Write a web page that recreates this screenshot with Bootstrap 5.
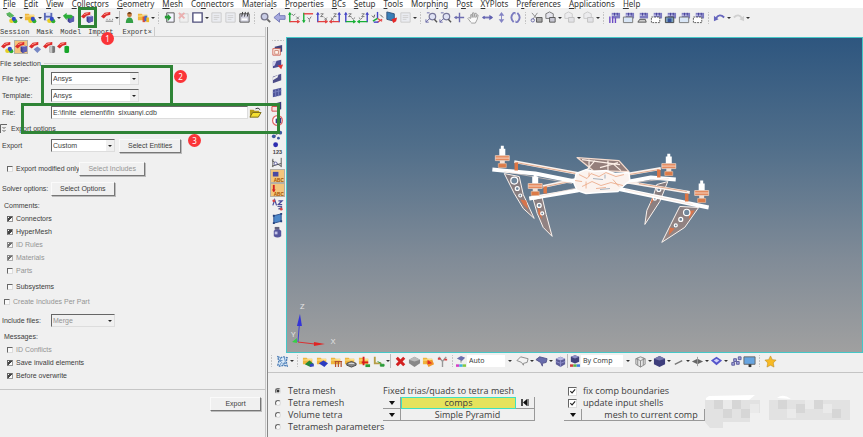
<!DOCTYPE html>
<html lang="en">
<head>
<meta charset="utf-8">
<meta name="viewport" content="width=device-width, initial-scale=1">
<title>HyperMesh - Export</title>
<link href="https://cdn.jsdelivr.net/npm/bootstrap@5.3.0/dist/css/bootstrap.min.css" rel="stylesheet">
<style>
:root{--face:#f0f0f0;--ink:#3c3c3c;--dim:#949494;--mark:#2f8436}
body{font:8px/12px "Noto Sans","Open Sans",sans-serif;color:var(--ink);background:var(--face)}
button,select,input{font:inherit;color:inherit}
.menubar{line-height:8px;height:8px;padding-left:3px;gap:8px;background:#fff}
.menubar a{color:#333;text-decoration:none}
.menubar u{text-underline-offset:1px}
.tools{height:19px;padding-left:4px}
.tool{width:14px;height:14px;padding:0;border:0;background:none;flex:none;display:flex;align-items:center;justify-content:center}
.tool svg{width:13px;height:13px;display:block;flex:none}
.tool.faded{opacity:.3}
.tool.pressed{background:#f3c57c;outline:1px solid #b5b0a6;outline-offset:-1px}
.tool.marked{width:19px;height:21px;margin:0 3px;border:3px solid var(--mark)}
.drop{width:5px;height:14px;padding:0;border:0;background:none;flex:none;display:flex;align-items:center;justify-content:center}
.drop::after{content:"";border:2px solid transparent;border-top-color:#333;border-bottom:0}
.grip{width:7px;height:12px;flex:none;background:radial-gradient(circle,#999 0 1px,transparent 1px) center/3px 3px repeat-y}
.rule{width:3px;height:14px;flex:none;border-left:1px solid #bbb}
.export-panel{width:266px;border-right:1px solid #c8c8c8;font:7px/13px "Liberation Sans",Arial,sans-serif}
.tabs{font:7px/10px "Liberation Mono",monospace;border-bottom:1px solid #d0d0d0;height:10px;gap:7px}
.tabs button{border:0;padding:0;background:none}
.tabs .current{border-right:1px solid #ccc;padding:0 2px}
.mode-row{height:20px;padding:3px 0}
.legend-line{height:13px}
.legend-line::after{content:"";flex:1;border-top:1px solid #d3d3d3;margin:0 3px}
.field{height:17px;padding:0 3px 0 2px}
.short{height:15px}
.caption-col{width:49px;flex:none}
.sunken{height:13px;border:1px solid;border-color:#666 #ddd #ddd #666;background:#fff;padding:0 1px;border-radius:0;line-height:11px;outline:0}
.combo{appearance:none;width:88px;background:#fff linear-gradient(#f0f0f0,#f0f0f0) right/8px 100% no-repeat}
.combo-box{position:relative;display:flex}
.combo-box::after{content:"";position:absolute;right:3px;top:6px;border:2px solid transparent;border-top-color:#222;border-bottom:0;pointer-events:none}
.narrow{width:64px}
.raised{height:14px;padding:0 4px;border:1px solid;border-color:#fafafa #777 #777 #fafafa;border-radius:0;background:var(--face);line-height:12px;box-shadow:1px 1px 0 #bbb}
.check{height:13px;padding-left:7px;gap:3px}
.check input,.opt input{appearance:none;flex:none;width:6px;height:6px;margin:0;border:1px solid;border-color:#666 #ddd #ddd #666;background:#fafafa center/5px 5px no-repeat}
.check input:checked{border-color:#666 #999 #999 #666;background-image:linear-gradient(135deg,transparent 25%,#444 25% 60%,transparent 60%)}
.check input:disabled:checked{opacity:.75}
.off,.combo:disabled,.raised:disabled{color:var(--dim)}
.combo:disabled{background-color:var(--face);opacity:1}
.g2{margin-top:2px}.g3{margin-top:3px}.g5{margin-top:5px}.g8{margin-top:8px}
.foot{border-top:1px solid #c6c6c6;margin-top:7px;padding:7px 4px}
.export-button{width:51px}
.workspace{border-left:1px solid #888;margin-left:1px}
.side-tools{width:18px;padding:10px 0 0 1px}
.side-tools .grip{width:12px;height:6px;background:radial-gradient(circle,#999 0 1px,transparent 1px) center/3px 3px repeat-x}
.side-tools .tool{width:15px}
.canvas3d{margin-top:10px;border:1px solid #45c7c7;background:linear-gradient(#2e567f,#506e8a 34%,#808b97 70%,#a0a0a0)}
.view-tools{height:16px}
.view-pick{gap:1px;font-size:7px}
.view-pick svg{width:10px;height:12px}
.view-pick select{appearance:none;border:0;border-radius:0;background:#fff;padding:0 2px;height:12px;width:38px}
.view-pick .color-mode{width:42px}
.wide-drop{width:10px}
.task{border-top:1px solid #c4c4c4;height:65px;padding:12px 12px 0 7px;margin-top:3px;font:9px/12px "Open Sans","Noto Sans",sans-serif;overflow:hidden}
.opt{height:12px;gap:7px;white-space:nowrap}
.opt input{border-radius:50%}
.opt input:checked{background:radial-gradient(circle,#333 0 1px,#fff 2px)}
.opt .tick{width:9px;height:9px;border-radius:0;background:#fff}
.opt .tick:checked{background:#fff url("data:image/svg+xml,%3Csvg xmlns='http://www.w3.org/2000/svg' viewBox='0 0 8 8'%3E%3Cpath d='M1.500 3.500l2 2 3.500-4' fill='none' stroke='%23222' stroke-width='1.300'/%3E%3C/svg%3E") center/7px 7px no-repeat}
.task-a{width:108px}.task-b{width:152px}.task-c{width:141px;margin-left:29px}
.bar button{height:12px;border:0;border-right:1px solid #999;border-bottom:1px solid #999;background:var(--face);padding:0;line-height:11px;white-space:nowrap}
.bar .pick{width:18px;flex:none;display:flex;align-items:center;justify-content:center}
.pick::after{content:"";border:3px solid transparent;border-top:4px solid #111;border-bottom:0}
.bar .comps{background:#e5e35c;border:1px solid #3fe0c0;line-height:10px}
.indent{padding-left:4px;gap:6px}
.hidden-area{height:34px;margin-top:10px;min-width:0}
.mark-box{position:absolute;border:3px solid var(--mark);pointer-events:none}
.mark-box.two{left:41px;top:65px;width:132px;height:41px}
.mark-box.three{left:21px;top:103px;width:259px;height:31px}
.step{position:absolute;width:13px;height:13px;border-radius:50%;background:#fb3438;color:#fff;text-align:center;line-height:13px;font-size:8px}
.s1{left:101px;top:32px}.s2{left:174px;top:70px}.s3{left:188px;top:134px}
</style>
<script src="https://cdn.jsdelivr.net/npm/bootstrap@5.3.0/dist/js/bootstrap.bundle.min.js"></script>
</head>
<body class="d-flex flex-column vh-100 overflow-hidden position-relative">

<svg class="d-none" aria-hidden="true">
<defs>
<g id="p-cube"><path d="M6 6l5-1 2 1v5l-5 2-2-2z" fill="#3c3c90"/><path d="M6 6l5-1 2 1-5 1z" fill="#9a9ad8"/><path d="M8 7l5-1v5l-5 2z" fill="#5d5db4"/></g>
<g id="p-red"><path d="M0 6l4-4 6-1 0 3-4 1-3 3z" fill="#dc2b2b"/><path d="M3 4l5-2" stroke="#ff9a8a"/></g>
<g id="p-green"><path d="M1 5l4-3v2h5l2 2-2 2H5v2z" fill="#2eae3a"/></g>
<g id="p-balls"><circle cx="7" cy="10.500" r="2.500" fill="#e6cf25"/><circle cx="11" cy="11" r="2.300" fill="#2fae32"/><circle cx="9.500" cy="8.500" r="2.300" fill="#3349c8"/></g>
<g id="p-folder"><path d="M1 3h4l1 1h5v6H1z" fill="#efb53c"/><path d="M1 5l10-1v2H1z" fill="#ffe38a"/></g>
<g id="p-win"><path d="M4 2h9v6H4z" fill="#7c7ac0"/><path d="M3 4h8v1H3z" fill="#d8d8f2"/><path d="M7 2v3M10 2v3" stroke="#443f96"/></g>
<g id="p-abc"><text x="3" y="13" font-size="5" font-weight="bold" font-family="Liberation Sans" fill="#a14f00">ABC</text></g>
</defs>
<symbol id="new" viewBox="0 0 14 14"><path d="M1 3l4-2 5 4-3 2z" fill="#58b85c"/><path d="M2 4l4 3" stroke="#257f2c"/><use href="#p-balls"/></symbol>
<symbol id="open" viewBox="0 0 14 14"><use href="#p-folder"/><use href="#p-balls"/></symbol>
<symbol id="save" viewBox="0 0 14 14"><path d="M1 2h9v8H1z" fill="#5968b6"/><path d="M3 2h5v3H3zM3 7h5v3H3z" fill="#dde4f8"/><use href="#p-balls"/></symbol>
<symbol id="import" viewBox="0 0 14 14"><use href="#p-cube"/><use href="#p-green"/></symbol>
<symbol id="export" viewBox="0 0 14 14"><use href="#p-cube"/><use href="#p-red"/></symbol>
<symbol id="export-text" viewBox="0 0 14 14"><use href="#p-red"/><path d="M5 11h8M6 9h1m2 0h1m2 0h1" stroke="#777"/></symbol>
<symbol id="user" viewBox="0 0 14 14"><circle cx="7" cy="4" r="2.600" fill="#c77a3c"/><path d="M4.500 3q2.500-4 5 0z" fill="#5c3212"/><path d="M3 13q0-6 4-6t4 6z" fill="#35a047"/></symbol>
<symbol id="profile" viewBox="0 0 14 14"><use href="#p-folder"/><path d="M6 6h3v6H6z" fill="#df4c33"/><path d="M8 5h3v6H8z" fill="#3f6bd0"/><path d="M10 7h3v5h-3z" fill="#efbd27"/></symbol>
<symbol id="page-add" viewBox="0 0 14 14"><path d="M4 2h8v10H4z" fill="#f4f4ff" stroke="#555"/><path d="M2 5h3V3l4 4-4 4V8H2z" fill="#279a36"/></symbol>
<symbol id="page-del" viewBox="0 0 14 14"><path d="M3 3h9v9H3z" fill="#eee" stroke="#888"/><path d="M2 2l6 6m0-6l-6 6" stroke="#e02020" stroke-width="2"/></symbol>
<symbol id="frame" viewBox="0 0 14 14"><path d="M2 2h10v10H2z" fill="#fff" stroke="#50507c" stroke-width="1.500"/></symbol>
<symbol id="page" viewBox="0 0 14 14"><path d="M2 2h10v10H2z" fill="#dfe3f4" stroke="#777"/><path d="M4 5h6M4 7h6M4 9h4" stroke="#888"/></symbol>
<symbol id="report" viewBox="0 0 14 14"><path d="M2 3h10v9H2z" fill="#d5d5e2" stroke="#555"/><path d="M5 1l-1 5M8 1L7 6M11 1l-1 5" stroke="#333"/><path d="M4 8h6v2H4z" fill="#fff"/></symbol>
<symbol id="zoom" viewBox="0 0 14 14"><circle cx="6" cy="6" r="3.500" fill="#c9cde6" stroke="#77778c" stroke-width="1.500"/><path d="M9 9l3 3" stroke="#666" stroke-width="2"/></symbol>
<symbol id="zoom-box" viewBox="0 0 14 14"><circle cx="8" cy="6" r="3.500" fill="#dfe2f4" stroke="#77779a" stroke-width="1.300"/><path d="M10 9l3 3" stroke="#555" stroke-width="1.500"/><path d="M1 12l4-4M1 9v3h3M2 2h3" stroke="#6868a8" fill="none"/></symbol>
<symbol id="back" viewBox="0 0 14 14"><path d="M1 7l6-5v3h6v4H7v3z" fill="#a5a8de" stroke="#7478b5"/></symbol>
<symbol id="ax1" viewBox="0 0 14 14"><path d="M3 2v10" stroke="#17af35" stroke-width="1.500"/><path d="M3 11.500h10M11 10l2 1.500-2 1.500" stroke="#e34141" fill="none" stroke-width="1.300"/><path d="M1 4l2-3 2 3z" fill="#17af35"/><path d="M5 3l2 2 2-2M10 6l3 3m0-3l-3 3" stroke="#777" fill="none"/></symbol>
<symbol id="ax2" viewBox="0 0 14 14"><path d="M3 2v10" stroke="#17af35" stroke-width="1.500"/><path d="M3 3h10" stroke="#e34141" stroke-width="1.500"/><path d="M1 10l2 3 2-3z" fill="#17af35"/><path d="M7 7l2 2 2-3M9 9v3" stroke="#777" fill="none"/></symbol>
<symbol id="ax3" viewBox="0 0 14 14"><path d="M3 2v10" stroke="#4444c6" stroke-width="1.500"/><path d="M3 11.500h10M11 10l2 1.500-2 1.500" stroke="#e34141" fill="none" stroke-width="1.300"/><path d="M1 4l2-3 2 3z" fill="#4444c6"/><path d="M6 3h3L6 6h3M10 7l3 3m0-3l-3 3" stroke="#777" fill="none"/></symbol>
<symbol id="ax4" viewBox="0 0 14 14"><path d="M11 2v10" stroke="#4444c6" stroke-width="1.500"/><path d="M1 11.500h10M3 10l-2 1.500L3 13" stroke="#e34141" fill="none" stroke-width="1.300"/><path d="M9 4l2-3 2 3z" fill="#4444c6"/><path d="M5 3h3L5 6h3M2 7l3 3m0-3l-3 3" stroke="#777" fill="none"/></symbol>
<symbol id="ax5" viewBox="0 0 14 14"><path d="M3 2v10" stroke="#4444c6" stroke-width="1.500"/><path d="M3 11.500h10M11 10l2 1.500-2 1.500" stroke="#17af35" fill="none" stroke-width="1.300"/><path d="M1 4l2-3 2 3z" fill="#4444c6"/><path d="M6 3h3L6 6h3M9 7l2 2 2-2" stroke="#777" fill="none"/></symbol>
<symbol id="ax6" viewBox="0 0 14 14"><path d="M11 2v10" stroke="#4444c6" stroke-width="1.500"/><path d="M1 11.500h10M3 10l-2 1.500L3 13" stroke="#17af35" fill="none" stroke-width="1.300"/><path d="M9 4l2-3 2 3z" fill="#4444c6"/><path d="M5 3h3L5 6h3M2 7l2 2 2-2" stroke="#777" fill="none"/></symbol>
<symbol id="iso" viewBox="0 0 14 14"><path d="M7 8V1" stroke="#4444c6" stroke-width="1.500"/><path d="M7 8l5 3M7 12l5-3" stroke="#e34141" stroke-width="1.300"/><path d="M7 8l-5 3" stroke="#17af35" stroke-width="1.500"/><path d="M1 5l2 2 1-3M10 4l3 3" stroke="#555" fill="none"/><path d="M3 12h5" stroke="#4444c6" stroke-width="1.500"/></symbol>
<symbol id="view-set" viewBox="0 0 14 14"><path d="M2 1l8 2v8l-8-2z" fill="#3a7fb8" stroke="#31527c"/><path d="M7 9l6-2-1 4-3 2z" fill="#e62828"/></symbol>
<symbol id="move" viewBox="0 0 14 14"><path d="M7 2v10M2 7h10" stroke="#6d6db0" stroke-width="1.500"/><path d="M1 7l3-2v4z" fill="#6d6db0"/></symbol>
<symbol id="hand" viewBox="0 0 14 14"><path d="M4 12L1 8l1-1 2 1V4h1.500v3l.5-5h1.500v5l1-4.500H10L9.500 7l1.500-3 1 .5L11 9l-2 4H5z" fill="#fafafa" stroke="#888" stroke-width=".8"/></symbol>
<symbol id="pan-h" viewBox="0 0 14 14"><path d="M2 7h10" stroke="#7474bb" stroke-width="2"/><path d="M9 4l4 3-4 3zM4 5L1 7l3 2z" fill="#6060b0"/></symbol>
<symbol id="pan-v" viewBox="0 0 14 14"><path d="M7 3v8" stroke="#8484c4"/><path d="M4 5l3-4 3 4zM4 9l3 4 3-4z" fill="#8484c4"/></symbol>
<symbol id="spin" viewBox="0 0 14 14"><path d="M5 2q-5 5 0 10M9 2q5 5 0 10" fill="none" stroke="#7a7abf" stroke-width="2"/><path d="M4 1h3v3zM7 10v3h3z" fill="#7a7abf"/></symbol>
<symbol id="cut" viewBox="0 0 14 14"><path d="M2 2l6 7M8 2L3 9" stroke="#888"/><circle cx="3" cy="10" r="1.800" fill="none" stroke="#6d6dab"/><path d="M7 7h6v5H7z" fill="#aaa" stroke="#555"/></symbol>
<symbol id="copy" viewBox="0 0 14 14"><path d="M2 3l4-2 4 2v5H2z" fill="#e4e4ec" stroke="#777"/><path d="M6 7h6v5H6z" fill="#c7c7d3" stroke="#555"/></symbol>
<symbol id="w1" viewBox="0 0 14 14"><use href="#p-win"/><path d="M2 6v7M5 6v7M8 7v6" stroke="#6c4bc4" stroke-width="1.500"/></symbol>
<symbol id="w2" viewBox="0 0 14 14"><use href="#p-win"/><path d="M1.500 6.500h10v6h-10z" fill="#d9e6f6" stroke="#777"/></symbol>
<symbol id="w3" viewBox="0 0 14 14"><use href="#p-win"/><path d="M2 12l2-3h6l1 3z" fill="#ccc" stroke="#555"/></symbol>
<symbol id="w4" viewBox="0 0 14 14"><use href="#p-win"/><path d="M1.500 6.500h9v6h-9z" fill="#fff" stroke="#555" stroke-dasharray="2 1"/></symbol>
<symbol id="w5" viewBox="0 0 14 14"><use href="#p-win"/><path d="M1.500 6.500h9v6h-9z" fill="#7ba1bd" stroke="#444"/><path d="M4 8h4v4H4z" fill="#35509a"/></symbol>
<symbol id="undo" viewBox="0 0 14 14"><path d="M3 8q4-6 9-1" fill="none" stroke="#6666bd" stroke-width="2"/><path d="M1 5v6l5-2z" fill="#6666bd"/></symbol>
<symbol id="redo" viewBox="0 0 14 14"><path d="M11 8Q7 2 2 7" fill="none" stroke="#888" stroke-width="2"/><path d="M13 5v6L8 9z" fill="#888"/></symbol>
<symbol id="ex-balls" viewBox="0 0 14 14"><use href="#p-balls"/><use href="#p-red"/></symbol>
<symbol id="ex-geo" viewBox="0 0 14 14"><use href="#p-red"/><path d="M5 9l4-3 4 3-4 4z" fill="#7788c4"/></symbol>
<symbol id="ex-cyl" viewBox="0 0 14 14"><use href="#p-red"/><path d="M7 6q3-2 6 0v6q-3 2-6 0z" fill="#777"/><path d="M7 6q2-1 3-1v8q-2 0-3-1z" fill="#c4c4c4"/></symbol>
<symbol id="ex-green" viewBox="0 0 14 14"><use href="#p-red"/><path d="M8 6q2.500-2 5 0v6q-2.500 2-5 0z" fill="#17a52a"/></symbol>
<symbol id="s1" viewBox="0 0 14 14"><path d="M4 3l8-2v7l-8 3z" fill="#43437c"/><path d="M2 5h8v7H2z" fill="#fff5ee" stroke="#cf6457"/><path d="M4 7h4v4H4z" fill="none" stroke="#cf8a7a"/></symbol>
<symbol id="s2" viewBox="0 0 14 14"><path d="M2 4l9-2v7l-9 2z" fill="#4b4b92"/><path d="M2 4l4-1-2 5-2 1z" fill="#d1d1ec"/><path d="M7 8l6-1-2 5z" fill="#e03434"/></symbol>
<symbol id="s3" viewBox="0 0 14 14"><path d="M2 5l9-3v7l-9 3z" fill="#4c4c88"/><path d="M2 6l6-3-1 3-5 3z" fill="#eee"/></symbol>
<symbol id="s4" viewBox="0 0 14 14"><path d="M2 4l9-2v8l-9 2z" fill="#4e5499"/><path d="M5 3.500v8M8 3v8M2 7l9-2" stroke="#777ebc"/></symbol>
<symbol id="s5" viewBox="0 0 14 14"><path d="M3 4l8-2v8l-8 2z" fill="#36367a"/><path d="M1 7h6v5H1z" fill="#f8dede" stroke="#d54848"/></symbol>
<symbol id="s6" viewBox="0 0 14 14"><circle cx="7" cy="7" r="5.300" fill="#fff" stroke="#df6666" stroke-width="1.300"/><path d="M5 5l6-1v6H5z" fill="#3a3a82"/></symbol>
<symbol id="s7" viewBox="0 0 14 14"><path d="M3 9l6-4" stroke="#888"/><circle cx="3" cy="9" r="2" fill="#3e579f"/><circle cx="10" cy="5" r="2" fill="#3e579f"/><circle cx="8" cy="11" r="1.500" fill="#3e579f"/></symbol>
<symbol id="s8" viewBox="0 0 14 14"><circle cx="5" cy="3" r="2.600" fill="#2c2cb0"/><text x="2" y="12.500" font-size="6" font-family="Liberation Sans" font-weight="bold" fill="#444">123</text></symbol>
<symbol id="s9" viewBox="0 0 14 14"><path d="M1 5l10 6M1 11l10-3M2 3v9M11 2v10" stroke="#555" fill="none"/><circle cx="5" cy="8" r="1.500" fill="#fff" stroke="#5f5fa0"/></symbol>
<symbol id="s10" viewBox="0 0 14 14"><path d="M2 2h6v5H2z" fill="#4a4aa2"/><use href="#p-abc"/></symbol>
<symbol id="s11" viewBox="0 0 14 14"><path d="M3 1v7" stroke="#d22020" stroke-width="2"/><path d="M1 6l2 3 2-3z" fill="#d22020"/><use href="#p-abc"/></symbol>
<symbol id="s12" viewBox="0 0 14 14"><path d="M2 8l2-6 2 6M8 3h4L8 7h4" stroke="#4a4a9a" fill="none" stroke-width="1.300"/><path d="M7 9h5M8 12l4-2" stroke="#5a5a96" stroke-width="1.500"/><circle cx="3" cy="3" r="1.500" fill="#d84444"/><circle cx="11" cy="12" r="1.500" fill="#d84444"/></symbol>
<symbol id="s13" viewBox="0 0 14 14"><path d="M3 4l8-2v8l-8 2z" fill="#4d88ca" stroke="#2e508e"/><path d="M2 3h2v2H2zM10 1h2v2h-2zM2 11h2v2H2zM10 9h2v2h-2z" fill="#24427c"/></symbol>
<symbol id="s14" viewBox="0 0 14 14"><path d="M4 1h5v3H4z" fill="#62627c"/><path d="M3 5q4-3 8 0v6q-4 3-8 0z" fill="#55559c"/><path d="M4 6h3v3H4z" fill="#c4c4e8"/></symbol>
<symbol id="mesh" viewBox="0 0 14 14"><path d="M2 2l3 1 3-1 4 1-1 4 1 5-4-1-4 1-2-1 1-4z" fill="#dcebf9" stroke="#4b7cb5" stroke-width="1.500" stroke-dasharray="2 1"/><path d="M5 3l-1 3 2 2-2 3M9 3l1 4-2 4M3 6h4M7 9h4" stroke="#5e8cc0" fill="none"/></symbol>
<symbol id="f1" viewBox="0 0 14 14"><use href="#p-folder"/><path d="M3 10l5-4 5 4-4 3z" fill="#268b35"/><path d="M8 10l4-1 1 3-4 1z" fill="#3546c4"/></symbol>
<symbol id="f2" viewBox="0 0 14 14"><use href="#p-folder"/><path d="M3 9l5-3 5 3-4 4z" fill="#2c3cc0"/></symbol>
<symbol id="f3" viewBox="0 0 14 14"><use href="#p-folder"/><path d="M5 7h8M6 7v6M9 7v6M12 7v6" stroke="#b5502c" stroke-width="1.300"/></symbol>
<symbol id="f4" viewBox="0 0 14 14"><use href="#p-folder"/><path d="M3 9l5-2 5 2v2l-5 2-5-2z" fill="#888" stroke="#444"/><path d="M5 9h6" stroke="#eee"/></symbol>
<symbol id="f5" viewBox="0 0 14 14"><use href="#p-folder"/><path d="M6 2v9M4 8h7" stroke="#d81c1c" stroke-width="2"/><path d="M8 10h5v3H8z" fill="#2a9a36"/></symbol>
<symbol id="f6" viewBox="0 0 14 14"><path d="M3 2v7h7" stroke="#b59d45" fill="none" stroke-width="2"/><path d="M6 7l4 2M9 10h4v2H9z" stroke="#2c9c3a" fill="#2c9c3a"/></symbol>
<symbol id="delete" viewBox="0 0 14 14"><path d="M3 3l8 8m0-8l-8 8" stroke="#d32020" stroke-width="3.200"/></symbol>
<symbol id="gray-cube" viewBox="0 0 14 14"><path d="M1 5l6-3 6 3v4l-6 4-6-4z" fill="#888"/><path d="M1 5l6-3 6 3-6 2z" fill="#bbb"/></symbol>
<symbol id="orange" viewBox="0 0 14 14"><use href="#p-folder"/><path d="M4 7l7-2 2 5-6 3z" fill="#f2962c"/><path d="M6 5l5 4-5 1z" fill="#df3027"/></symbol>
<symbol id="branch" viewBox="0 0 14 14"><path d="M3 2l4 5 4-5M7 7v6" stroke="#999" fill="none" stroke-width="1.500"/><path d="M2 4h3M9 5h3" stroke="#db4040" stroke-width="2"/></symbol>
<symbol id="auto" viewBox="0 0 12 14"><path d="M1 4l5-3 5 2-4 4z" fill="#6b6fae"/><path d="M6 6v3" stroke="#777"/><path d="M0 11h4v3H0z" fill="#d43fc7"/><path d="M4 11h4v3H4z" fill="#3bb5e0"/><path d="M8 11h4v3H8z" fill="#86c840"/></symbol>
<symbol id="bycomp" viewBox="0 0 12 14"><path d="M1 2l5-2 5 2v6l-5 2-5-2z" fill="#42427c"/><path d="M1 2l5-2 5 2-5 2z" fill="#8e8ec6"/><path d="M0 11h4v3H0z" fill="#d43f3f"/><path d="M4 11h4v3H4z" fill="#5cb947"/><path d="M8 11h4v3H8z" fill="#3b7be0"/></symbol>
<symbol id="surf" viewBox="0 0 14 14"><path d="M1 6l4-4 8 2-1 4-4 1v2L6 8z" fill="#f2f2f2" stroke="#888"/></symbol>
<symbol id="surf-blue" viewBox="0 0 14 14"><path d="M1 5l4-3 8 2-1 4-4 1v3L6 8z" fill="#686cac" stroke="#55558c"/></symbol>
<symbol id="cube" viewBox="0 0 14 14"><path d="M2 4l5-2 5 2v6l-5 3-5-3z" fill="#5c5c98"/><path d="M2 4l5-2 5 2-5 2z" fill="#b8b8e2"/><path d="M7 6v7M2 7l5 2 5-2" stroke="#8f8fca" fill="none"/></symbol>
<symbol id="cube-wire" viewBox="0 0 14 14"><path d="M2 4l5-2 5 2v6l-5 3-5-3zM2 4l5 2 5-2M7 6v7M4 3v8M10 3v8" fill="#e5e5e5" stroke="#888"/></symbol>
<symbol id="cube-dark" viewBox="0 0 14 14"><path d="M1 4l6-3 6 3v6l-6 3-6-3z" fill="#3e3e7c"/><path d="M1 4l6-3 6 3-6 2z" fill="#7676ad"/></symbol>
<symbol id="line" viewBox="0 0 14 14"><path d="M3 10l8-4" stroke="#777" stroke-width="1.500"/></symbol>
<symbol id="plate" viewBox="0 0 14 14"><path d="M1 7l6-3 6 3-6 3z" fill="#666"/><path d="M7 2v10" stroke="#999"/></symbol>
<symbol id="plate-blue" viewBox="0 0 14 14"><path d="M1 6l6-4 6 4-6 5z" fill="#5555cc"/><path d="M4 6l3-2 3 2-3 2z" fill="#d1d1fa"/></symbol>
<symbol id="parts" viewBox="0 0 14 14"><path d="M3 8h3v3H3zM8 7h3v3H8zM5 4h3v3H5zM10 2h3v3h-3z" fill="#9c9cd8" stroke="#5c5c9c"/></symbol>
<symbol id="monitor" viewBox="0 0 14 14"><path d="M1 2h12v8H1z" fill="#66a4e0" stroke="#666"/><path d="M6 10h3v3H6z" fill="#333"/></symbol>
<symbol id="star" viewBox="0 0 14 14"><path d="M7 1l2 4 4 .5-3 3 .8 4.500L7 11l-3.800 2L4 8.500l-3-3L5 5z" fill="#f8ba24" stroke="#b98923" stroke-width=".6"/></symbol>
</svg>

<nav class="menubar d-flex flex-shrink-0" aria-label="Main menu">
<a href="#"><u>F</u>ile</a><a href="#"><u>E</u>dit</a><a href="#"><u>V</u>iew</a><a href="#"><u>C</u>ollectors</a><a href="#"><u>G</u>eometry</a><a href="#"><u>M</u>esh</a><a href="#">Co<u>n</u>nectors</a><a href="#">Materia<u>l</u>s</a><a href="#"><u>P</u>roperties</a><a href="#"><u>B</u>Cs</a><a href="#"><u>S</u>etup</a><a href="#"><u>T</u>ools</a><a href="#">Morph<u>i</u>ng</a><a href="#">P<u>o</u>st</a><a href="#"><u>X</u>YPlots</a><a href="#">P<u>r</u>eferences</a><a href="#"><u>A</u>pplications</a><a href="#"><u>H</u>elp</a>
</nav>
<div class="tools d-flex align-items-center" role="toolbar" aria-label="Standard" data-tools="new v open v save v import export! export-text v | user profile v : page-add page-del~ frame v page~ page~ report : zoom back ax1 ax2 ax3 ax4 ax5 ax6 iso view-set page~ v : zoom-box zoom-box move hand pan-h pan-v spin : cut copy v copy~ v copy~ v : w1 w2 w3 w4 w5 w2 w4 : undo v redo~ v"></div>

<main class="d-flex flex-fill overflow-hidden">
<form class="export-panel flex-shrink-0" onsubmit="return false">
  <div class="tabs d-flex">
    <button type="button">Session</button><button type="button">Mask</button><button type="button">Model</button><button type="button">Import</button><button type="button" class="current">Export×</button>
  </div>
  <div class="mode-row d-flex" role="toolbar" aria-label="Export type" data-tools="ex-balls export^ ex-geo ex-cyl ex-green"></div>
  <div class="legend-line d-flex align-items-center">File selection</div>
  <div class="field d-flex align-items-center"><label class="caption-col" for="ftype">File type:</label><span class="combo-box"><select class="sunken combo" id="ftype"><option>Ansys</option></select></span></div>
  <div class="field d-flex align-items-center"><label class="caption-col" for="tmpl">Template:</label><span class="combo-box"><select class="sunken combo" id="tmpl"><option>Ansys</option></select></span></div>
  <div class="field d-flex align-items-center"><label class="caption-col" for="path">File:</label><input class="sunken flex-fill" id="path" value="E:\finite_element\fin_sixuanyi.cdb"><button class="tool" type="button" aria-label="Browse"><svg viewBox="0 0 14 14"><path d="M1 4h4l1 1h5v2H5l-3 5H1z" fill="#b69c1a"/><path d="M4 7h9l-3 5H1z" fill="#f4df32" stroke="#77691a"/><path d="M7 3q3-2 5 1" fill="none" stroke="#333"/></svg></button></div>
  <div class="d-flex align-items-center short"><svg class="me-1" width="7" height="9" viewBox="0 0 7 9"><path d="M.5 9V.5H7M2.500 3l1.500 1.500L5.500 3M2.500 6L4 7.500 5.500 6" fill="none" stroke="#666"/></svg>Export options</div>
  <div class="field short d-flex align-items-center g2"><label class="caption-col" for="exp">Export</label><span class="combo-box"><select class="sunken combo narrow" id="exp"><option>Custom</option></select></span><button class="raised ms-1 px-2" type="button">Select Entities</button></div>
  <div class="d-flex align-items-center short g8"><label class="check d-flex align-items-center"><input type="checkbox">Export modified only</label><button class="raised px-2" type="button" disabled>Select Includes</button></div>
  <div class="field short d-flex align-items-center g5"><span class="caption-col">Solver options:</span><button class="raised px-2" type="button">Select Options</button></div>
  <div class="g3 ps-1">Comments:</div>
  <label class="check d-flex align-items-center"><input type="checkbox" checked>Connectors</label>
  <label class="check d-flex align-items-center"><input type="checkbox" checked>HyperMesh</label>
  <label class="check d-flex align-items-center off"><input type="checkbox" checked disabled>ID Rules</label>
  <label class="check d-flex align-items-center off"><input type="checkbox" checked disabled>Materials</label>
  <label class="check d-flex align-items-center off"><input type="checkbox" disabled>Parts</label>
  <label class="check d-flex align-items-center g3"><input type="checkbox">Subsystems</label>
  <label class="check d-flex align-items-center off g2 ps-1"><input type="checkbox" disabled>Create Includes Per Part</label>
  <div class="field short d-flex align-items-center g5"><label class="caption-col" for="inc">Include files:</label><span class="combo-box"><select class="sunken combo narrow" id="inc" disabled><option>Merge</option></select></span></div>
  <div class="g2 ps-1">Messages:</div>
  <label class="check d-flex align-items-center off"><input type="checkbox" disabled>ID Conflicts</label>
  <label class="check d-flex align-items-center"><input type="checkbox" checked>Save invalid elements</label>
  <label class="check d-flex align-items-center"><input type="checkbox" checked>Before overwrite</label>
  <div class="foot d-flex justify-content-end"><button class="raised export-button" type="submit">Export</button></div>
</form>

<section class="workspace d-flex flex-column flex-fill overflow-hidden">
  <div class="d-flex flex-fill overflow-hidden">
    <div class="side-tools d-flex flex-column align-items-center flex-shrink-0" role="toolbar" aria-label="Display" data-tools=": s1 s2 s3 s4 s5 s6 s7 s8 s9 s10^ s11^ s12 s13 s14"></div>
    <div class="canvas3d flex-fill overflow-hidden">
      <svg class="d-block w-100 h-100" viewBox="287 38 576 315" preserveAspectRatio="xMinYMin meet" role="img" aria-label="Quadcopter frame model">
        <defs>
          <g id="motor"><path d="M-1.500-10h3v3h-3zM-3-7h6v7h-6z" fill="#fff"/><path d="M-7 0H7v5H-7z" fill="#e58a5e" stroke="#f6d9c8" stroke-width=".7"/><path d="M-7 2.500H7" stroke="#fbe6da" stroke-width=".8"/><path d="M-2.500 5h5v3h-5z" fill="#f3e1d7"/><path d="M-4 8h8v4h-8z" fill="#dd7b48" stroke="#f2c2a5" stroke-width=".6"/></g>
        </defs>
        <g stroke="#fff" stroke-linejoin="round" fill="none">
          <g fill="#d9865e" fill-opacity=".3" stroke="#fbf3ee" stroke-width="1">
            <path d="M505 174l15 3 4 18 11 24-11-10-9-15z"/>
            <path d="M534 200l9-2 4 17 6 22-9-9-6-14z"/>
            <path d="M658 185l11-3-8 20-15 23 2-14 6-13z"/>
            <path d="M681 207l19 1-14 20-23 15 9-18z"/>
          </g>
          <g fill="#d9744a" stroke="none"><path d="M521 200l6 1 2 9-5-5zM539 206l3 8 1 6-4-6zM654 196l3 1-6 9zM671 228l5 1-6 7zM691 211l5 0-6 9z"/></g>
          <g stroke="#fff" stroke-width="1.200" fill="#70879c"><circle cx="515" cy="181" r="3.500"/><circle cx="518" cy="189" r="2"/><circle cx="521" cy="196" r="1.500"/><circle cx="540" cy="206" r="2"/><circle cx="543" cy="214" r="1.500"/><circle cx="660" cy="190" r="2"/><circle cx="656" cy="199" r="1.700"/><circle cx="688" cy="213" r="3.200"/><circle cx="682" cy="220" r="2"/><circle cx="677" cy="226" r="1.500"/></g>
          <path d="M515 162l64 12M544 187l33-7M627 175l35-6M625 182l66 11" stroke="#fbf3ee" stroke-width="3"/>
          <path d="M517 163l60 11M546 187l30-6M630 175l30-5M640 184l48 8" stroke="#dd9874" stroke-width=".8"/>
          <path d="M493 170l43 4 45 9M530 199l48-8 24-7M613 188l97 20M620 184l32-6 25 2" stroke-width="4"/>
          <path d="M505 172l68 12M540 197l44-10M626 184l44-5M626 190l68 15" stroke="#f3dcd0" stroke-width=".6"/>
          <path d="M578 158l42 3 10 11-36-1z" fill="#d08a69" fill-opacity=".5" stroke="#f5ddd0" stroke-width="1.300"/>
          <path d="M583 160l38 5M590 160v10M596 161l-8 9M609 161v14M601 168l18-5M614 164l8 7" stroke="#fbeee6" stroke-width="1.200"/>
          <path d="M577 174l10-4 8 2 12-1 9 3 14-1 1 8-6 5-6 6-19 1-13 1-9-3-3-7z" fill="#fbf3ef" stroke-width="1.500"/>
          <path d="M580 175l8 4 4-5 8 3 7-4 10 4 8-2M583 187l10-5 9 4 10-3 12 3M590 173v4M587 182v7M614 180l6 7M597 189l10-1M576 181l7 1" stroke="#eaa482" stroke-width=".8"/>
          <path d="M594 179l10 1M601 190l10-1M606 175v4" stroke="#8fa0b0" stroke-width=".8"/>
          <path d="M517 163v8M546 187v7M660 170v8M688 194v8" stroke="#de7644" stroke-width="3.500"/>
        </g>
        <use href="#motor" x="503" y="156"/><use href="#motor" x="536" y="184"/><use href="#motor" x="670" y="164"/><use href="#motor" x="703" y="191"/>
        <path d="M298 343l1.500-19" stroke="#3e3ecb"/><path d="M297 327l3-12 2 12z" fill="#3434d8"/>
        <path d="M298 343l17 2" stroke="#d93030"/><path d="M314 343l11 2-11 2z" fill="#e02424"/>
        <path d="M292 343l5-4v5z" fill="#36cf45"/>
        <g font-family="Noto Sans,sans-serif" font-size="8" fill="#e3e3e3"><text x="300" y="310">Z</text><text x="291" y="338">Y</text><text x="331" y="345">X</text></g>
      </svg>
    </div>
  </div>
  <div class="view-tools d-flex align-items-center flex-shrink-0">
    <div class="d-flex align-items-center" data-tools=": mesh v : f1 f2 f3 f4 f5 f6 v | delete gray-cube orange branch :"></div>
    <label class="view-pick d-flex align-items-center"><svg><use href="#auto"/></svg><select aria-label="Visualization mode"><option>Auto</option></select></label>
    <div class="d-flex align-items-center" data-tools="V surf v surf-blue v cube |"></div>
    <label class="view-pick d-flex align-items-center"><svg><use href="#bycomp"/></svg><select class="color-mode" aria-label="Color mode"><option>By Comp</option></select></label>
    <div class="d-flex align-items-center" data-tools="V cube-wire v cube-dark v line v plate v plate-blue v parts monitor : star"></div>
  </div>
  <div class="task d-flex flex-shrink-0">
    <div class="task-a flex-shrink-0">
      <label class="opt d-flex align-items-center"><input type="radio" name="task" checked>Tetra mesh</label>
      <label class="opt d-flex align-items-center"><input type="radio" name="task">Tetra remesh</label>
      <label class="opt d-flex align-items-center"><input type="radio" name="task">Volume tetra</label>
      <label class="opt d-flex align-items-center"><input type="radio" name="task">Tetramesh parameters</label>
    </div>
    <div class="task-b flex-shrink-0">
      <div class="text-nowrap">Fixed trias/quads to tetra mesh</div>
      <div class="bar d-flex"><button class="pick" type="button" aria-label="Entity type"></button><button class="comps flex-fill" type="button">comps</button><button type="button" aria-label="Reset"><svg class="d-block" width="18" height="11" viewBox="0 0 18 11"><path d="M6 2v7" stroke="#111" stroke-width="1.500"/><path d="M11 2v7L7 5.500z" fill="#111"/><path d="M12 2v7" stroke="#111"/></svg></button></div>
      <div class="bar d-flex"><button class="pick" type="button" aria-label="Pyramid type"></button><button class="flex-fill" type="button">Simple Pyramid</button></div>
    </div>
    <div class="task-c flex-shrink-0">
      <label class="opt indent d-flex align-items-center"><input class="tick" type="checkbox" checked>fix comp boundaries</label>
      <label class="opt indent d-flex align-items-center"><input class="tick" type="checkbox" checked>update input shells</label>
      <div class="bar d-flex"><button class="pick" type="button" aria-label="Destination"></button><button class="flex-fill ps-3" type="button">mesh to current comp</button></div>
    </div>
    <svg class="hidden-area flex-fill" viewBox="0 0 146 34" preserveAspectRatio="xMinYMin meet" aria-hidden="true">
      <path d="M1 3l3-2 46-1-6 5H1zM72 3q6-5 14 1z" fill="#fff"/>
      <path d="M0 5h55v13h-10v9H18v6H5l-5-6zM64 5h81v20H64z" fill="#e2e2e2"/>
      <path d="M9 5h9v9H9zM27 5h9v9h-9zM18 14h9v9h-9zM36 14h9v9h-9zM73 5h9v9h-9zM91 9h9v9h-9zM109 5h9v9h-9zM127 14h9v9h-9z" fill="#d6d6d6"/>
      <path d="M18 5h9v9h-9zM45 9h9v9h-9zM82 14h9v9h-9zM100 5h9v9h-9zM118 9h9v9h-9z" fill="#eaeaea"/>
    </svg>
  </div>
</section>
</main>

<div class="mark-box two"></div>
<div class="mark-box three"></div>
<span class="step s1">1</span><span class="step s2">2</span><span class="step s3">3</span>

<script>
// Toolbar notation: v = drop arrow, V = wide drop arrow, | = rule, : = grip,
// suffixes: ~ disabled, ^ pressed, ! outlined.
document.querySelectorAll('[data-tools]').forEach(function (bar) {
  bar.innerHTML = bar.dataset.tools.split(' ').map(function (t) {
    if (t === ':') return '<span class="grip"></span>';
    if (t === '|') return '<span class="rule"></span>';
    if (t === 'v' || t === 'V') return '<button type="button" class="drop' + (t === 'V' ? ' wide-drop' : '') + '" aria-label="More"></button>';
    var name = t.replace(/[~^!]/, '');
    var state = {'~': ' faded', '^': ' pressed', '!': ' marked'}[t.slice(-1)] || '';
    return '<button type="button" class="tool' + state + '" aria-label="' + name + '"' + (state === ' faded' ? ' disabled' : '') + '><svg viewBox="0 0 14 14"><use href="#' + name + '"/></svg></button>';
  }).join('');
});
</script>
</body>
</html>
